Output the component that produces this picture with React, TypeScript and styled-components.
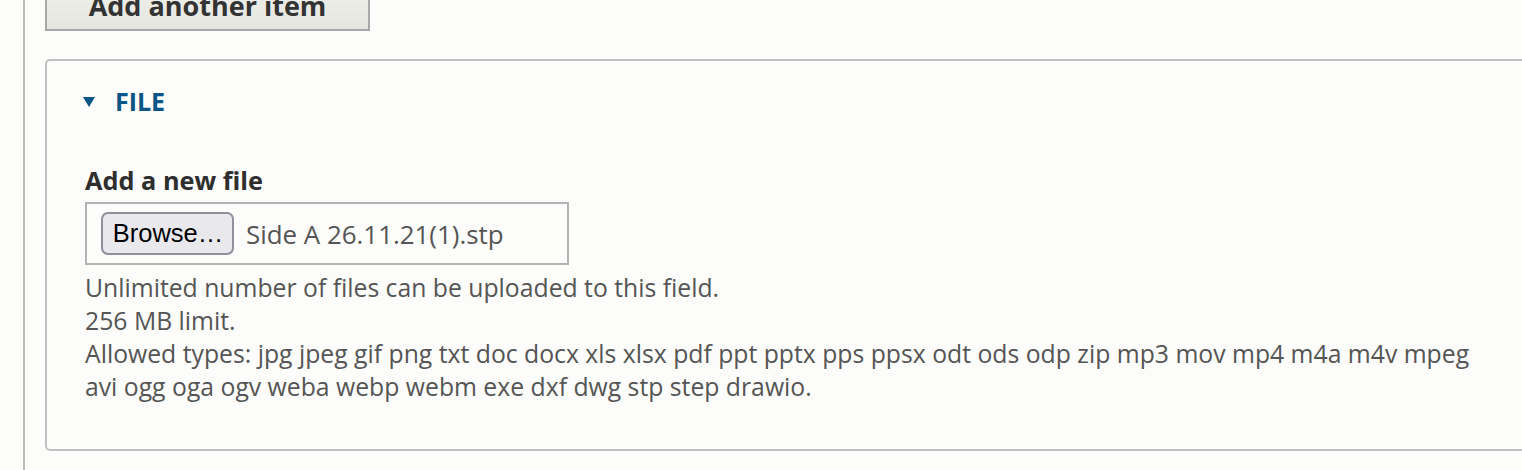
import React from "react";
import styled, { createGlobalStyle } from "styled-components";

const Global = createGlobalStyle`
  html, body { margin: 0; padding: 0; background: #fcfcfa; }
  body { overflow: hidden; font-family: "Open Sans", "Noto Sans", sans-serif; }
  * { box-sizing: border-box; }
`;

const Page = styled.div`
  width: 1522px;
  height: 470px;
  overflow: hidden;
  padding-left: 23px;
  background: #fcfcfa;
`;

const Column = styled.div`
  height: 100%;
  border-left: 2px solid #bdbdbd;
  padding-left: 20px;
  display: flex;
  flex-direction: column;
  align-items: flex-start;
`;

const AddButton = styled.button`
  margin-top: -19px;
  width: 325px;
  height: 50px;
  border: 2px solid #a8a8a8;
  border-radius: 0;
  background: linear-gradient(to bottom, #f1f1ed, #e6e6e0);
  font-family: "Open Sans", sans-serif;
  font-weight: 700;
  font-size: 27px;
  line-height: 44px;
  color: #333;
  padding: 0;
  text-align: center;
`;

const Fieldset = styled.section`
  margin-top: 28px;
  align-self: stretch;
  margin-right: -40px;
  border: 2px solid #c0c0c0;
  border-radius: 5px;
  padding: 22px 38px 46px 38px;
  display: flex;
  flex-direction: column;
  align-items: flex-start;
`;

const Summary = styled.div`
  display: flex;
  align-items: center;
  gap: 20px;
  height: 36px;
  color: #0b5587;
  font-weight: 700;
  font-size: 25px;
  line-height: 36px;
  margin-left: -2px;
`;

const Triangle = styled.svg`
  flex: none;
  width: 12px;
  height: 10px;
  margin-top: 2px;
`;

const FieldLabel = styled.label`
  margin-top: 46px;
  font-weight: 700;
  font-size: 25.3px;
  line-height: 30px;
  color: #2e2e2e;
`;

const FileBox = styled.div`
  margin-top: 7px;
  width: 484px;
  height: 63px;
  border: 2px solid #b3b3b3;
  padding: 8px 14px;
  display: flex;
  align-items: center;
  gap: 12px;
`;

const BrowseButton = styled.button`
  flex: none;
  width: 133px;
  height: 43px;
  border: 2px solid #8f8f9d;
  border-radius: 7px;
  background: #e9e9ed;
  color: #000;
  font-family: "Liberation Sans", Arial, sans-serif;
  font-size: 25.5px;
  padding: 0 0 0 1px;
`;

const FileName = styled.span`
  font-size: 25.9px;
  color: #555;
`;

const Description = styled.div`
  margin-top: 6px;
  font-size: 24.75px;
  line-height: 33px;
  color: #555;
  max-width: 1420px;
`;

export default function App() {
  return (
    <>
      <Global />
      <Page>
        <Column>
          <AddButton type="button">Add another item</AddButton>
          <Fieldset>
            <Summary>
              <Triangle viewBox="0 0 12 10">
                <polygon points="0,0 12,0 6,10" fill="#0b5587" />
              </Triangle>
              <span>FILE</span>
            </Summary>
            <FieldLabel>Add a new file</FieldLabel>
            <FileBox>
              <BrowseButton type="button">Browse…</BrowseButton>
              <FileName>Side A 26.11.21(1).stp</FileName>
            </FileBox>
            <Description>
              Unlimited number of files can be uploaded to this field.
              <br />
              256 MB limit.
              <br />
              Allowed types: jpg jpeg gif png txt doc docx xls xlsx pdf ppt pptx pps ppsx odt ods odp zip mp3 mov mp4 m4a m4v mpeg
              <br />
              avi ogg oga ogv weba webp webm exe dxf dwg stp step drawio.
            </Description>
          </Fieldset>
        </Column>
      </Page>
    </>
  );
}
